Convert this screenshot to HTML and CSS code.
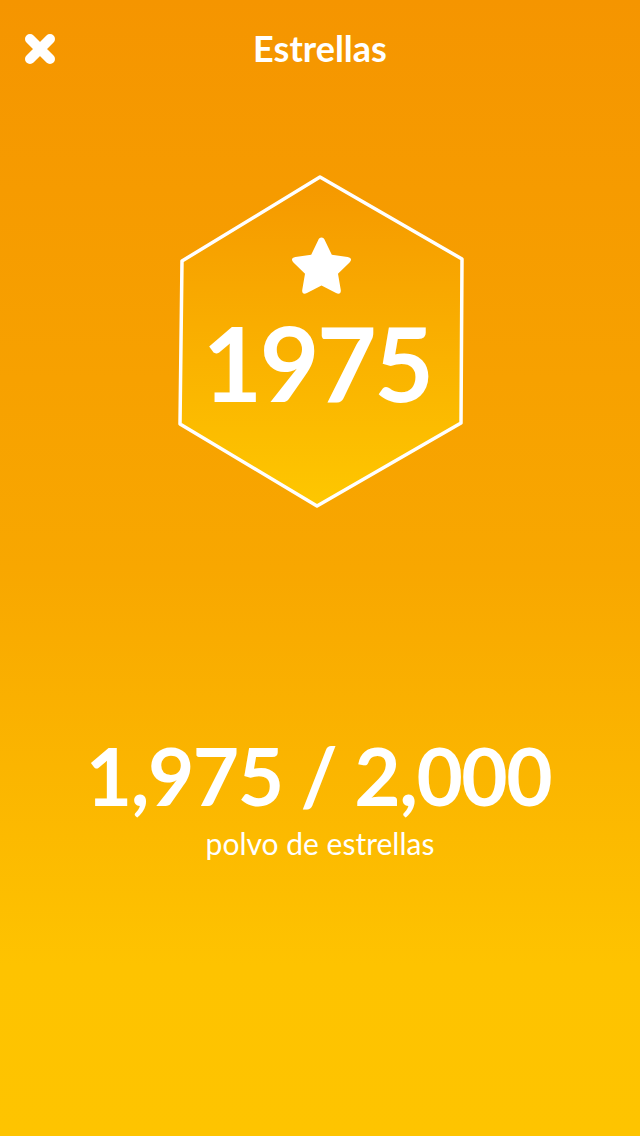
FILE: index.html
```html
<!DOCTYPE html>
<html lang="es">
<head>
<meta charset="utf-8">
<title>Estrellas</title>
<link rel="stylesheet" href="styles.css">
</head>
<body>
<div class="screen">
  <header class="topbar">
    <button class="close" aria-label="Cerrar">
      <svg width="34" height="34" viewBox="0 0 34 34"><path d="M7 7 L27 27 M27 7 L7 27" stroke="#fff" stroke-width="10" stroke-linecap="round"/></svg>
    </button>
    <h1 class="title">Estrellas</h1>
    <span class="spacer"></span>
  </header>

  <section class="badge">
    <svg class="hex" width="292" height="334" viewBox="0 0 292 334">
      <defs>
        <linearGradient id="hg" x1="0" y1="0" x2="0" y2="1">
          <stop offset="0" stop-color="#F59800"/>
          <stop offset="1" stop-color="#FEC700"/>
        </linearGradient>
      </defs>
      <polygon points="145,2 287,84 286,248 142,331 5,249 7,86" fill="url(#hg)" stroke="#fff" stroke-width="3.5" stroke-linejoin="round"/>
    </svg>
    <div class="badge-content">
      <svg class="star" width="71" height="69" viewBox="0 0 62 60"><path d="M31 3 C32.5 3 33.3 4 33.9 5.3 L40 18 L53.8 19.9 C57 20.4 57.7 22.5 55.5 24.7 L45.4 34.6 L47.8 48.5 C48.3 51.6 46.5 52.9 43.7 51.4 L31 44.9 L18.3 51.4 C15.5 52.9 13.7 51.6 14.2 48.5 L16.6 34.6 L6.5 24.7 C4.3 22.5 5 20.4 8.2 19.9 L22 18 L28.1 5.3 C28.7 4 29.5 3 31 3 Z" fill="#fff"/></svg>
      <div class="level">1975</div>
    </div>
  </section>

  <section class="progress">
    <div class="amount">1,975 / 2,000</div>
    <div class="label">polvo de estrellas</div>
  </section>
</div>
</body>
</html>
```

FILE: styles.css
```css
* { box-sizing: border-box; }
html, body { margin: 0; padding: 0; }
body {
  font-family: Lato, "Open Sans", "Liberation Sans", sans-serif;
  color: #fff;
}
.screen {
  width: 640px;
  height: 1136px;
  background: linear-gradient(180deg, #F59500 0%, #F8A700 50%, #FEC300 85%, #FEC400 100%);
  display: flex;
  flex-direction: column;
  align-items: center;
}
.topbar {
  width: 100%;
  height: 98px;
  display: flex;
  align-items: center;
  justify-content: space-between;
  padding: 0 23px 0 23px;
}
.close {
  width: 34px;
  height: 34px;
  border: 0;
  padding: 0;
  background: none;
  display: flex;
}
.spacer { width: 34px; }
.title {
  margin: 0 0 2px 0;
  font-size: 36px;
  font-weight: 700;
}
.badge {
  position: relative;
  width: 292px;
  height: 334px;
  margin-top: 77px;
  margin-left: 2px;
}
.hex { position: absolute; left: 0; top: 0; }
.badge-content {
  position: relative;
  display: flex;
  flex-direction: column;
  align-items: center;
  padding-top: 59px;
}
.star { display: block; }
.level {
  font-size: 103px;
  font-weight: 700;
  line-height: 1;
  margin-top: 8px;
  margin-right: 8px;
  letter-spacing: -2.5px;
}
.progress {
  margin-top: 226px;
  margin-right: 3px;
  display: flex;
  flex-direction: column;
  align-items: center;
}
.amount {
  font-size: 80px;
  font-weight: 700;
  line-height: 1;
  letter-spacing: -1.5px;
}
.label {
  font-size: 30px;
  font-weight: 400;
  line-height: 1.2;
  margin-top: 10px;
  margin-left: 3px;
}
```
